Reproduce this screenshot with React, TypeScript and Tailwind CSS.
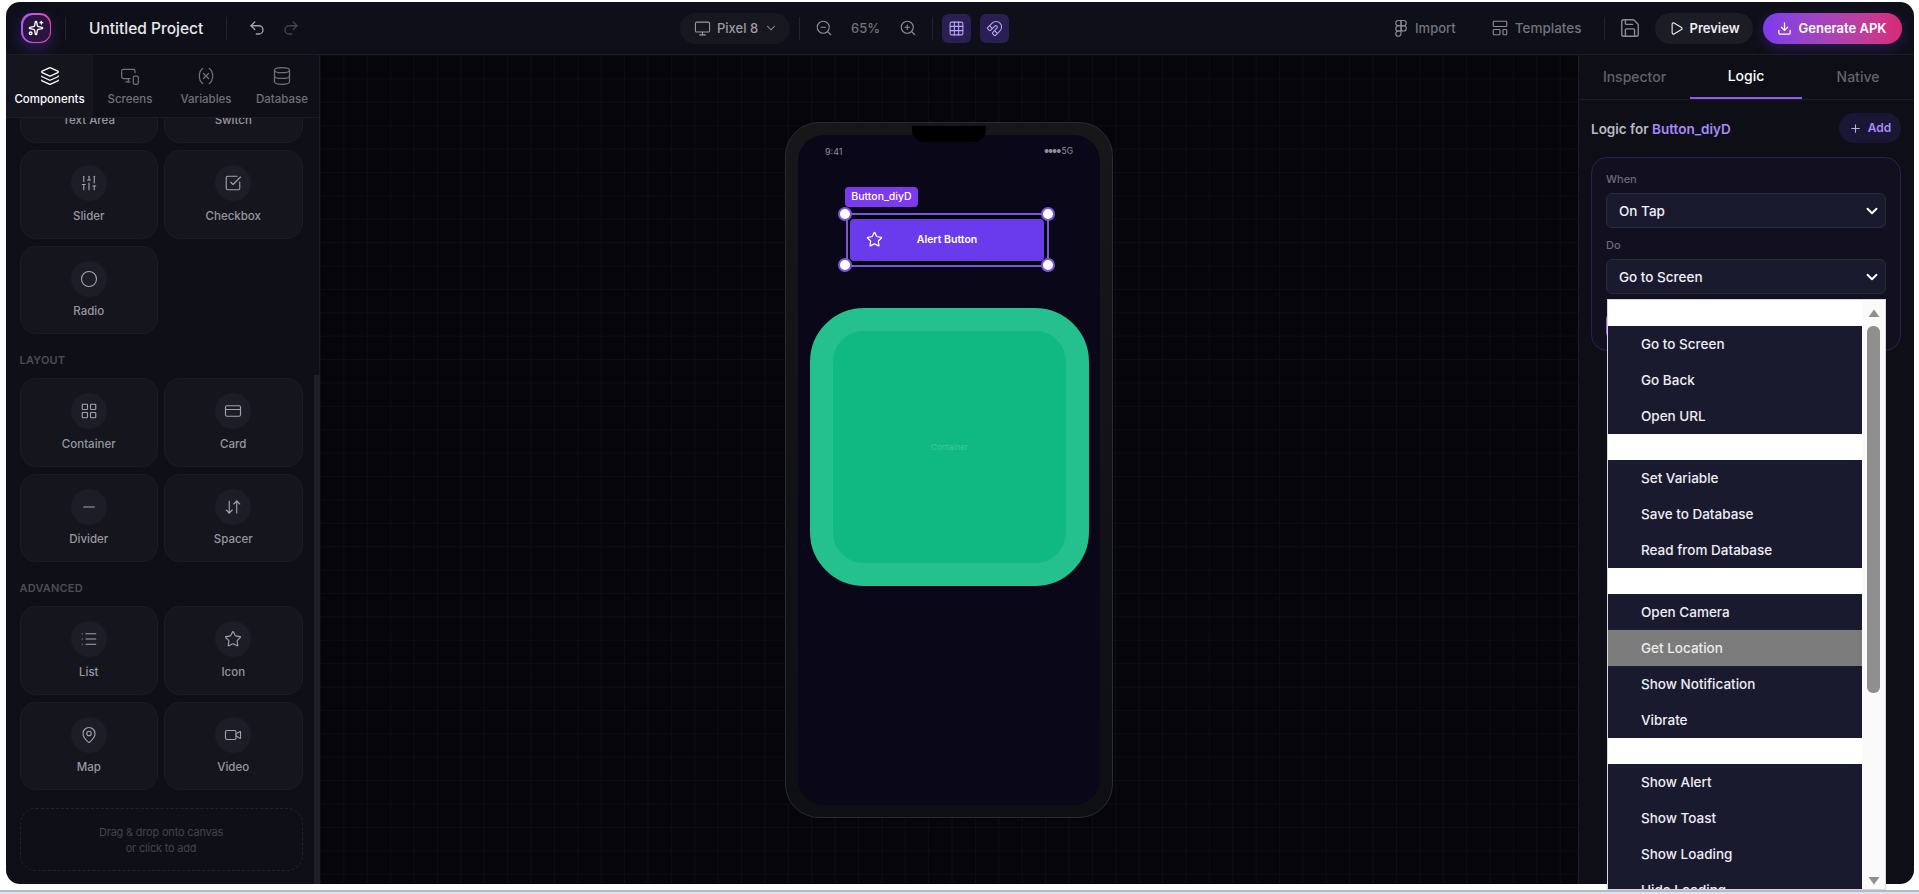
import {
  ArrowDownUp,
  ChevronDown,
  Circle,
  CreditCard,
  Database,
  Download,
  Figma,
  Grid3x3,
  Layers,
  LayoutGrid,
  LayoutTemplate,
  List,
  Magnet,
  MapPin,
  Minus,
  Monitor,
  MonitorSmartphone,
  Play,
  Plus,
  Redo2,
  Save,
  SlidersVertical,
  Sparkles,
  SquareCheckBig,
  Star,
  ToggleLeft,
  Type,
  Undo2,
  Variable,
  Video,
  ZoomIn,
  ZoomOut,
} from "lucide-react"
import type { ComponentType } from "react"

type Icon = ComponentType<{ className?: string; strokeWidth?: number }>

function ComponentCard({ icon: I, label }: { icon: Icon; label: string }) {
  return (
    <div className="h-[88.5px] rounded-2xl border border-[#1b1c26] bg-[#14151d] pt-[14px] flex flex-col items-center">
      <div className="w-9 h-9 rounded-full bg-[#1c1d26] flex items-center justify-center shrink-0">
        <I className="w-[18px] h-[18px] text-[#a3a4ab]" strokeWidth={1.5} />
      </div>
      <span className="mt-[6.5px] text-[11.5px] leading-4 font-medium text-[#97989f]">{label}</span>
    </div>
  )
}

function SectionTitle({ children }: { children: string }) {
  return <h3 className="mt-[18px] mb-[10px] text-[11px] leading-4 font-semibold tracking-[0.2px] text-[#4b4c56]">{children}</h3>
}

function LeftTab({ icon: I, label, active, width }: { icon: Icon; label: string; active?: boolean; width: string }) {
  return (
    <div className={`${width} flex flex-col items-center pt-[11px] ${active ? "bg-[#14151d] text-white" : "text-[#6f7078]"}`}>
      <I className="w-5 h-5" strokeWidth={1.5} />
      <span className="mt-[5px] text-[11.5px] leading-4 font-medium">{label}</span>
    </div>
  )
}

function Sidebar() {
  return (
    <aside className="relative w-[314px] shrink-0 flex flex-col bg-[#0f1017] border-r border-[#1c1d27] rounded-bl-[14px] overflow-hidden">
      <div className="relative z-10 flex h-[63px] shrink-0 bg-[#0f1017] border-b border-[#1c1d27]">
        <LeftTab icon={Layers} label="Components" active width="w-[87px]" />
        <LeftTab icon={MonitorSmartphone} label="Screens" width="w-[74px]" />
        <LeftTab icon={Variable} label="Variables" width="w-[78px]" />
        <LeftTab icon={Database} label="Database" width="w-[74px]" />
      </div>
      <div className="flex-1 overflow-hidden px-[13.5px]">
        <div className="-mt-[63.5px]">
          <div className="grid grid-cols-2 w-[283px] gap-x-[6px] gap-y-[7px]">
            <ComponentCard icon={Type} label="Text Area" />
            <ComponentCard icon={ToggleLeft} label="Switch" />
            <ComponentCard icon={SlidersVertical} label="Slider" />
            <ComponentCard icon={SquareCheckBig} label="Checkbox" />
            <ComponentCard icon={Circle} label="Radio" />
          </div>
          <SectionTitle>LAYOUT</SectionTitle>
          <div className="grid grid-cols-2 w-[283px] gap-x-[6px] gap-y-[7px]">
            <ComponentCard icon={LayoutGrid} label="Container" />
            <ComponentCard icon={CreditCard} label="Card" />
            <ComponentCard icon={Minus} label="Divider" />
            <ComponentCard icon={ArrowDownUp} label="Spacer" />
          </div>
          <SectionTitle>ADVANCED</SectionTitle>
          <div className="grid grid-cols-2 w-[283px] gap-x-[6px] gap-y-[7px]">
            <ComponentCard icon={List} label="List" />
            <ComponentCard icon={Star} label="Icon" />
            <ComponentCard icon={MapPin} label="Map" />
            <ComponentCard icon={Video} label="Video" />
          </div>
          <div className="mt-[18px] w-[283px] h-[63px] rounded-2xl border border-dashed border-[#22232d] flex flex-col items-center justify-center text-[11px] tracking-[-0.2px] leading-4 text-[#42434d]">
            <span>Drag &amp; drop onto canvas</span>
            <span>or click to add</span>
          </div>
        </div>
      </div>
      {/* scrollbar */}
      <div className="absolute right-0 top-[320px] bottom-0 w-[5px] bg-[#1e1f27]" />
    </aside>
  )
}

function Handle({ className }: { className: string }) {
  return <span className={`absolute w-[14px] h-[14px] rounded-full bg-white border-2 border-[#7a55e0] ${className}`} />
}

function Phone() {
  return (
    <div className="relative w-[328px] h-[696px] rounded-[34px] border border-[#2a2b30] bg-gradient-to-b from-[#17171a] to-[#0e0f12] p-3">
      <div className="absolute left-[126px] top-[3px] w-[74px] h-[16px] rounded-b-xl bg-black z-10" />
      <div className="h-[670px] rounded-[26px] bg-[#0a0818] overflow-visible">
        <div className="h-[34px] px-[27px] flex items-center justify-between text-[9px] text-[#8f8f98]">
          <span>9:41</span>
          <span className="flex items-center">
            <span className="text-[5px] tracking-[-0.5px]">●●●●</span>
            <span className="ml-[1px] text-[8.5px]">5G</span>
          </span>
        </div>
        <div className="mt-[18px] ml-[47px] w-[73px] h-[20px] rounded bg-[#7c3aed] text-white text-[10.5px] font-medium flex items-center justify-center">
          Button_diyD
        </div>
        <div className="relative mt-[6px] ml-[48px] w-[203px] h-[54px] border-2 border-[#7a55e0] bg-black pl-[2px] pt-[4px]">
          <div className="w-[194px] h-[42px] rounded bg-[#6a3bec] flex items-center px-[16px] text-white">
            <Star className="w-[17px] h-[17px] shrink-0" strokeWidth={1.75} />
            <span className="flex-1 text-center pr-[17px] text-[10.5px] font-semibold">Alert Button</span>
          </div>
          <Handle className="-left-[10px] -top-[8px]" />
          <Handle className="-right-[8px] -top-[8px]" />
          <Handle className="-left-[10px] -bottom-[7px]" />
          <Handle className="-right-[8px] -bottom-[7px]" />
        </div>
        <div className="mt-[41px] ml-[12px] w-[279px] h-[278px] rounded-[54px] border-[23px] border-[#24c08d] bg-[#10b981] flex items-center justify-center text-[8px] text-[#3ccb9b]">
          Container
        </div>
      </div>
    </div>
  )
}

const optionGroups = [
  ["Go to Screen", "Go Back", "Open URL"],
  ["Set Variable", "Save to Database", "Read from Database"],
  ["Open Camera", "Get Location", "Show Notification", "Vibrate"],
  ["Show Alert", "Show Toast", "Show Loading", "Hide Loading"],
]

function ActionList() {
  return (
    <div className="absolute z-10 left-[1px] top-[40px] w-[279px] h-[591px] flex bg-white border border-[#d6d6dc] overflow-hidden">
      <div className="w-[254px] shrink-0">
        {optionGroups.map((group) => (
          <div key={group[0]} className="pt-[26px]">
            {group.map((item) => (
              <div
                key={item}
                className={`h-9 pl-[33px] pt-[1px] flex items-center text-[13.5px] font-medium ${item === "Get Location" ? "bg-[#7b7b7b] text-[#ececec]" : "bg-[#1a1a2e] text-[#eeeef4]"}`}
              >
                {item}
              </div>
            ))}
          </div>
        ))}
      </div>
      <div className="flex-1 bg-[#fafafa] flex flex-col items-center pt-[9px] pb-[4px]">
        <svg width="12" height="8" viewBox="0 0 12 8" className="shrink-0">
          <path d="M6 0.5 L11.5 8 H0.5 Z" fill="#8f8f8f" />
        </svg>
        <div className="mt-[9px] w-[13px] h-[367px] rounded-[6px] bg-[#8f8f8f]" />
        <div className="flex-1" />
        <svg width="12" height="8" viewBox="0 0 12 8" className="shrink-0">
          <path d="M0.5 0 H11.5 L6 7.5 Z" fill="#8f8f8f" />
        </svg>
      </div>
    </div>
  )
}

function FakeSelect({ value }: { value: string }) {
  return (
    <div className="h-[35px] rounded-md border border-[#2a2a3e] bg-[#1a1a2e] pl-[12px] pr-[4px] flex items-center justify-between text-[13.5px] font-medium text-[#f1f1f6]">
      <span className="pt-px">{value}</span>
      <ChevronDown className="w-[18px] h-[18px] text-white" strokeWidth={2.5} />
    </div>
  )
}

function Inspector() {
  return (
    <aside className="w-[336px] shrink-0 bg-[#0e0f16] border-l border-[#1c1d27] rounded-br-[14px] flex flex-col">
      <div className="flex h-[45px] shrink-0 border-b border-[#1c1d27] text-sm font-medium">
        <div className="w-[111px] flex items-center justify-center text-[#62636c]">Inspector</div>
        <div className="w-[112px] flex items-center justify-center text-white border-b-2 border-[#8b5cf6]">Logic</div>
        <div className="w-[112px] flex items-center justify-center text-[#62636c]">Native</div>
      </div>
      <div className="pl-[12px] pr-[13px] pt-[13px]">
        <div className="flex items-center justify-between">
          <p className="mt-[3px] text-[13.5px] font-semibold text-[#b9bac2]">
            Logic for <span className="text-[#a78bfa]">Button_diyD</span>
          </p>
          <div className="w-[62px] h-[30px] rounded-full bg-[#1a1635] flex items-center justify-center gap-[6px] text-[#a78bfa] text-[12px] font-semibold">
            <Plus className="w-[13px] h-[13px] text-[#b9b0e6]" strokeWidth={2} />
            Add
          </div>
        </div>
        <div className="mt-[14px] w-[310px] h-[194px] rounded-2xl border border-[#2a1f52] bg-[#12101f] px-[14px] pt-[14px]">
          <label className="block text-[11px] leading-[14px] font-medium text-[#6b6b75] mb-[7px]">When</label>
          <FakeSelect value="On Tap" />
          <label className="block mt-[10px] text-[11px] leading-[14px] font-medium text-[#6b6b75] mb-[7px]">Do</label>
          <div className="relative">
            <FakeSelect value="Go to Screen" />
            <ActionList />
            <div className="mt-[19px] h-[26px] rounded-md bg-[#8b5cf6]" />
          </div>
        </div>
      </div>
    </aside>
  )
}

export default function App() {
  return (
    <div className="relative w-[1919px] h-[894px] bg-white overflow-hidden pt-[2px] pl-[6px] flex flex-col font-['Inter',sans-serif]">
      <div className="w-[1908px] h-[882px] shrink-0 flex flex-col">
        <header className="h-[53px] shrink-0 flex items-center bg-[#0e0f18] border-b border-[#1c1d27] rounded-t-[14px]">
          <div className="w-[674px] shrink-0 flex items-center pl-[15px]">
            <div className="w-[30px] h-[30px] rounded-[11px] bg-gradient-to-r from-[#a855f7] to-[#ec4899] p-[1.5px] shadow-[0_6px_16px_rgba(124,58,237,0.3)]">
              <div className="w-full h-full rounded-[10px] bg-[#2a1440] flex items-center justify-center">
                <Sparkles className="w-[16px] h-[16px] text-white" strokeWidth={2} />
              </div>
            </div>
            <span className="ml-[14px] w-px h-[23px] bg-[#22232c]" />
            <span className="ml-[23px] pt-px text-[15.5px] font-medium text-[#e8e8ee]">Untitled Project</span>
            <span className="ml-[23px] w-px h-[23px] bg-[#22232c]" />
            <Undo2 className="ml-[21px] w-[18px] h-[18px] text-[#a3a4ab]" strokeWidth={1.75} />
            <Redo2 className="ml-[16px] w-[18px] h-[18px] text-[#44454e]" strokeWidth={1.75} />
          </div>
          <div className="flex items-center">
            <div className="w-[110px] h-[31px] rounded-full bg-[#16171f] flex items-center pl-[14px] text-[#9a9ba2]">
              <Monitor className="w-[17px] h-[17px]" strokeWidth={1.5} />
              <span className="ml-[6px] pt-px text-[13px] font-medium">Pixel 8</span>
              <ChevronDown className="ml-[6px] w-[14px] h-[14px]" strokeWidth={1.75} />
            </div>
            <span className="ml-[9px] w-px h-[23px] bg-[#22232c]" />
            <ZoomOut className="ml-[15px] w-[18px] h-[18px] text-[#8b8c94]" strokeWidth={1.5} />
            <span className="ml-[18px] pt-px w-[30px] text-[13px] font-medium text-[#72737b]">65%</span>
            <ZoomIn className="ml-[18px] w-[18px] h-[18px] text-[#8b8c94]" strokeWidth={1.5} />
            <span className="ml-[15px] w-px h-[23px] bg-[#22232c]" />
            <div className="ml-[9px] w-[29px] h-[29px] rounded-md bg-[#2a1f52] flex items-center justify-center">
              <Grid3x3 className="w-[17px] h-[17px] text-[#b9a6f5]" strokeWidth={1.5} />
            </div>
            <div className="ml-[9px] w-[29px] h-[29px] rounded-md bg-[#2a1f52] flex items-center justify-center">
              <Magnet className="w-[17px] h-[17px] text-[#b9a6f5]" strokeWidth={1.5} />
            </div>
          </div>
          <div className="flex-1 flex items-center justify-end pr-[12.5px]">
            <Figma className="w-[18px] h-[18px] text-[#8b8c94]" strokeWidth={1.5} />
            <span className="ml-[5px] pt-px text-[13px] font-medium text-[#72737b]">Import</span>
            <LayoutTemplate className="ml-[35px] w-[18px] h-[18px] text-[#8b8c94]" strokeWidth={1.5} />
            <span className="ml-[6px] pt-px text-[13.5px] font-medium text-[#72737b]">Templates</span>
            <span className="ml-[22px] w-px h-[23px] bg-[#22232c]" />
            <Save className="ml-[14px] w-[22px] h-[22px] text-[#8b8c94]" strokeWidth={1.5} />
            <div className="ml-[14px] w-[98.5px] h-[31px] rounded-full bg-[#1b1c24] flex items-center pl-[14px] text-[#eeeef2]">
              <Play className="w-[15px] h-[15px]" strokeWidth={1.75} />
              <span className="ml-[6px] pt-px text-[13px] font-semibold">Preview</span>
            </div>
            <div className="ml-[9.5px] w-[139px] h-[31px] rounded-full bg-gradient-to-r from-[#7c3aed] to-[#db2777] flex items-center pl-[14px] text-white shadow-[0_4px_14px_rgba(124,58,237,0.25)]">
              <Download className="w-[15px] h-[15px]" strokeWidth={2} />
              <span className="ml-[7px] pt-px text-[13px] font-semibold">Generate APK</span>
            </div>
          </div>
        </header>
        <div className="flex-1 min-h-0 flex">
          <Sidebar />
          <main className="flex-1 flex items-center justify-center bg-[#06060a] bg-[linear-gradient(#0d0e13_1px,transparent_1px),linear-gradient(90deg,#0d0e13_1px,transparent_1px)] bg-size-[23.4px_23.4px]">
            <Phone />
          </main>
          <Inspector />
        </div>
      </div>
      {/* browser edge below the page */}
      <div className="absolute left-0 right-0 bottom-0 z-20 h-[4px] bg-[#dbe5f0] border-t-2 border-[#b4bac2]" />
    </div>
  )
}
